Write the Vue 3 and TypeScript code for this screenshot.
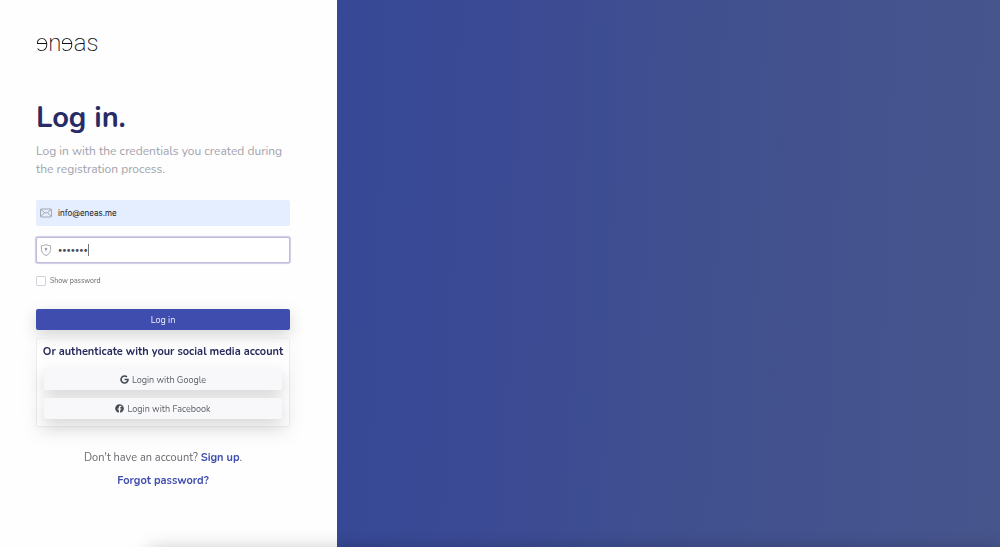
<script setup lang="ts">
import { onMounted, ref } from 'vue'

const email = ref('info@eneas.me')
const password = ref('secret7')
const showPassword = ref(false)
const passwordField = ref<HTMLInputElement | null>(null)

onMounted(() => {
  const field = passwordField.value
  if (!field) return
  field.focus()
  field.setSelectionRange(field.value.length, field.value.length)
})
</script>

<template>
  <div class="page">
    <main class="panel">
      <div class="logo"><span class="mirrored">e</span>n<span class="mirrored">e</span>as</div>

      <h1>Log in.</h1>
      <p class="intro">Log in with the credentials you created during the registration process.</p>

      <form @submit.prevent>
        <label class="field filled">
          <svg class="field-icon" viewBox="0 0 12 12" aria-hidden="true">
            <rect x="0.5" y="2" width="11" height="8" rx="1" />
            <path d="M0.8 2.5 4.600 5.600Q6 6.600 7.400 5.600L11.200 2.500M0.8 9.500 4.300 5.800M11.200 9.500 7.700 5.800" />
          </svg>
          <input v-model="email" type="email" aria-label="Email" />
        </label>

        <label class="field focused">
          <svg class="field-icon" viewBox="0 0 12 12" aria-hidden="true">
            <path d="M6 0.6C7.4 1.4 9 1.8 10.6 1.8V5.6C10.6 8.5 8.6 10.5 6 11.5 3.4 10.5 1.4 8.5 1.4 5.6V1.8C3 1.8 4.6 1.4 6 0.6Z" />
            <circle cx="6" cy="4.800" r="0.8" class="solid" />
            <path d="M6 5V7.4" />
          </svg>
          <span class="entry">
            <input
              ref="passwordField"
              v-model="password"
              :type="showPassword ? 'text' : 'password'"
              aria-label="Password"
            />
            <span class="caret"></span>
          </span>
        </label>

        <label class="show">
          <input v-model="showPassword" type="checkbox" />
          <span>Show password</span>
        </label>

        <button class="primary" type="submit">Log in</button>
      </form>

      <section class="social">
        <h2>Or authenticate with your social media account</h2>
        <button type="button">
          <svg viewBox="0 0 488 512" aria-hidden="true">
            <path d="M488 261.800C488 403.300 391.100 504 248 504 110.800 504 0 393.200 0 256S110.800 8 248 8c66.800 0 123 24.500 166.300 64.900l-67.500 64.900C258.500 52.600 94.300 116.600 94.300 256c0 86.500 69.100 156.600 153.700 156.600 98.200 0 135-70.400 140.800-106.900H248v-85.300h236.100c2.300 12.700 3.900 24.900 3.900 41.400z" />
          </svg>
          Login with Google
        </button>
        <button type="button">
          <svg viewBox="0 0 512 512" aria-hidden="true">
            <path d="M504 256C504 119 393 8 256 8S8 119 8 256c0 123.800 90.700 226.400 209.300 245V327.700h-63V256h63v-54.600c0-62.200 37-96.500 93.700-96.500 27.100 0 55.500 4.800 55.500 4.800v61h-31.300c-30.800 0-40.400 19.100-40.400 38.700V256h68.800l-11 71.700h-57.800V501C413.300 482.400 504 379.800 504 256z" />
          </svg>
          Login with Facebook
        </button>
      </section>

      <nav class="links">
        <p>Don't have an account? <a href="#signup">Sign up</a>.</p>
        <p><a href="#forgot">Forgot password?</a></p>
      </nav>
    </main>
    <div class="cover"></div>
    <div class="edge-shadow"></div>
  </div>
</template>

<style>
body {
  margin: 0;
}
</style>

<style scoped>
* {
  box-sizing: border-box;
}

.page {
  display: grid;
  grid-template-columns: 337fr 663fr;
  min-height: 100vh;
  position: relative;
  overflow: hidden;
  background: #fefefe;
  font-family: Nunito, Lato, 'Liberation Sans', sans-serif;
  color: #69696f;
}

.panel {
  padding: 29px 47px 24px 36px;
}

.cover {
  background: linear-gradient(92deg, #364896 0%, #3b4a94 24%, #40508f 54%, #44538e 78%, #47558d 100%);
}

.edge-shadow {
  position: absolute;
  right: 0;
  bottom: -20px;
  left: 150px;
  height: 16px;
  box-shadow: 0 0 20px rgba(0, 0, 0, 0.3);
}

.logo {
  font-family: Roboto, sans-serif;
  font-size: 24px;
  font-weight: 200;
  line-height: 28px;
  color: #101014;
}

.mirrored {
  display: inline-block;
  transform: scaleX(-1);
}

h1 {
  margin: 42px 0 5px;
  font-size: 29px;
  font-weight: 700;
  line-height: 38px;
  color: #272c66;
}

.intro {
  margin: 0 -4px 0 0;
  font-size: 12px;
  line-height: 18px;
  color: #a2a2ab;
}

form {
  margin-top: 22px;
}

.field {
  display: flex;
  align-items: center;
  gap: 6px;
  height: 26px;
  padding: 0 4px;
  border-radius: 2px;
}

.field.filled {
  background: #e5eefe;
}

.field.focused {
  margin-top: 11px;
  background: #fff;
  border: 1px solid #c0bbdc;
  padding: 0 3px;
  box-shadow: 0 0 1px 1px #cfcbe5;
}

.field-icon {
  flex: none;
  width: 12px;
  height: 12px;
  fill: none;
  stroke: #92949f;
  stroke-width: 0.8;
}

.solid {
  fill: #777985;
}

.field input {
  flex: 1;
  min-width: 0;
  padding: 0;
  border: 0;
  outline: 0;
  background: transparent;
  font-family: Inter, 'Liberation Sans', sans-serif;
  font-size: 8px;
  line-height: 16px;
  color: #16171c;
}

.entry {
  display: flex;
  flex: 1;
  align-items: center;
  min-width: 0;
}

.field .entry input {
  flex: none;
  field-sizing: content;
  max-width: 100%;
  caret-color: transparent;
  font-size: 9px;
  font-weight: 700;
  color: #4c4c54;
}

.caret {
  width: 1px;
  height: 12px;
  background: #77777f;
}

.show {
  display: flex;
  align-items: center;
  gap: 4px;
  width: max-content;
  margin-top: 12px;
  font-size: 7px;
  line-height: 12px;
}

.show input {
  appearance: none;
  width: 10px;
  height: 10px;
  margin: 0;
  border: 1px solid #d3d3db;
  border-radius: 1px;
  background: #fff;
}

.show input:checked {
  background: #3f4eae;
}

button {
  display: flex;
  align-items: center;
  justify-content: center;
  gap: 3px;
  width: 100%;
  height: 21px;
  padding: 0;
  border: 0;
  border-radius: 2px;
  font-family: inherit;
  font-size: 9px;
  line-height: 16px;
}

.primary {
  margin-top: 22px;
  background: #3f4eae;
  color: #eef0ff;
  box-shadow: 0 5px 16px rgba(0, 0, 0, 0.17);
}

.social {
  margin-top: 8px;
  padding: 4px 7px 7px;
  border: 1px solid #ececee;
  border-radius: 2px;
  box-shadow: 0 8px 20px rgba(0, 0, 0, 0.05);
}

.social h2 {
  margin: 0 -6px 8px;
  font-size: 11px;
  font-weight: 700;
  line-height: 18px;
  text-align: center;
  white-space: nowrap;
  color: #292b5c;
}

.social button {
  background: #f8f8fb;
  color: #5d6268;
  box-shadow: 0 6px 16px rgba(0, 0, 0, 0.16);
}

.social button + button {
  margin-top: 8px;
}

.social svg {
  width: 9px;
  height: 9px;
  fill: #454b50;
}

.links {
  margin-top: 22px;
  font-size: 11px;
  line-height: 18px;
  text-align: center;
}

.links p {
  margin: 0 0 5px;
}

.links a {
  font-weight: 700;
  color: #414eae;
  text-decoration: none;
}
</style>
